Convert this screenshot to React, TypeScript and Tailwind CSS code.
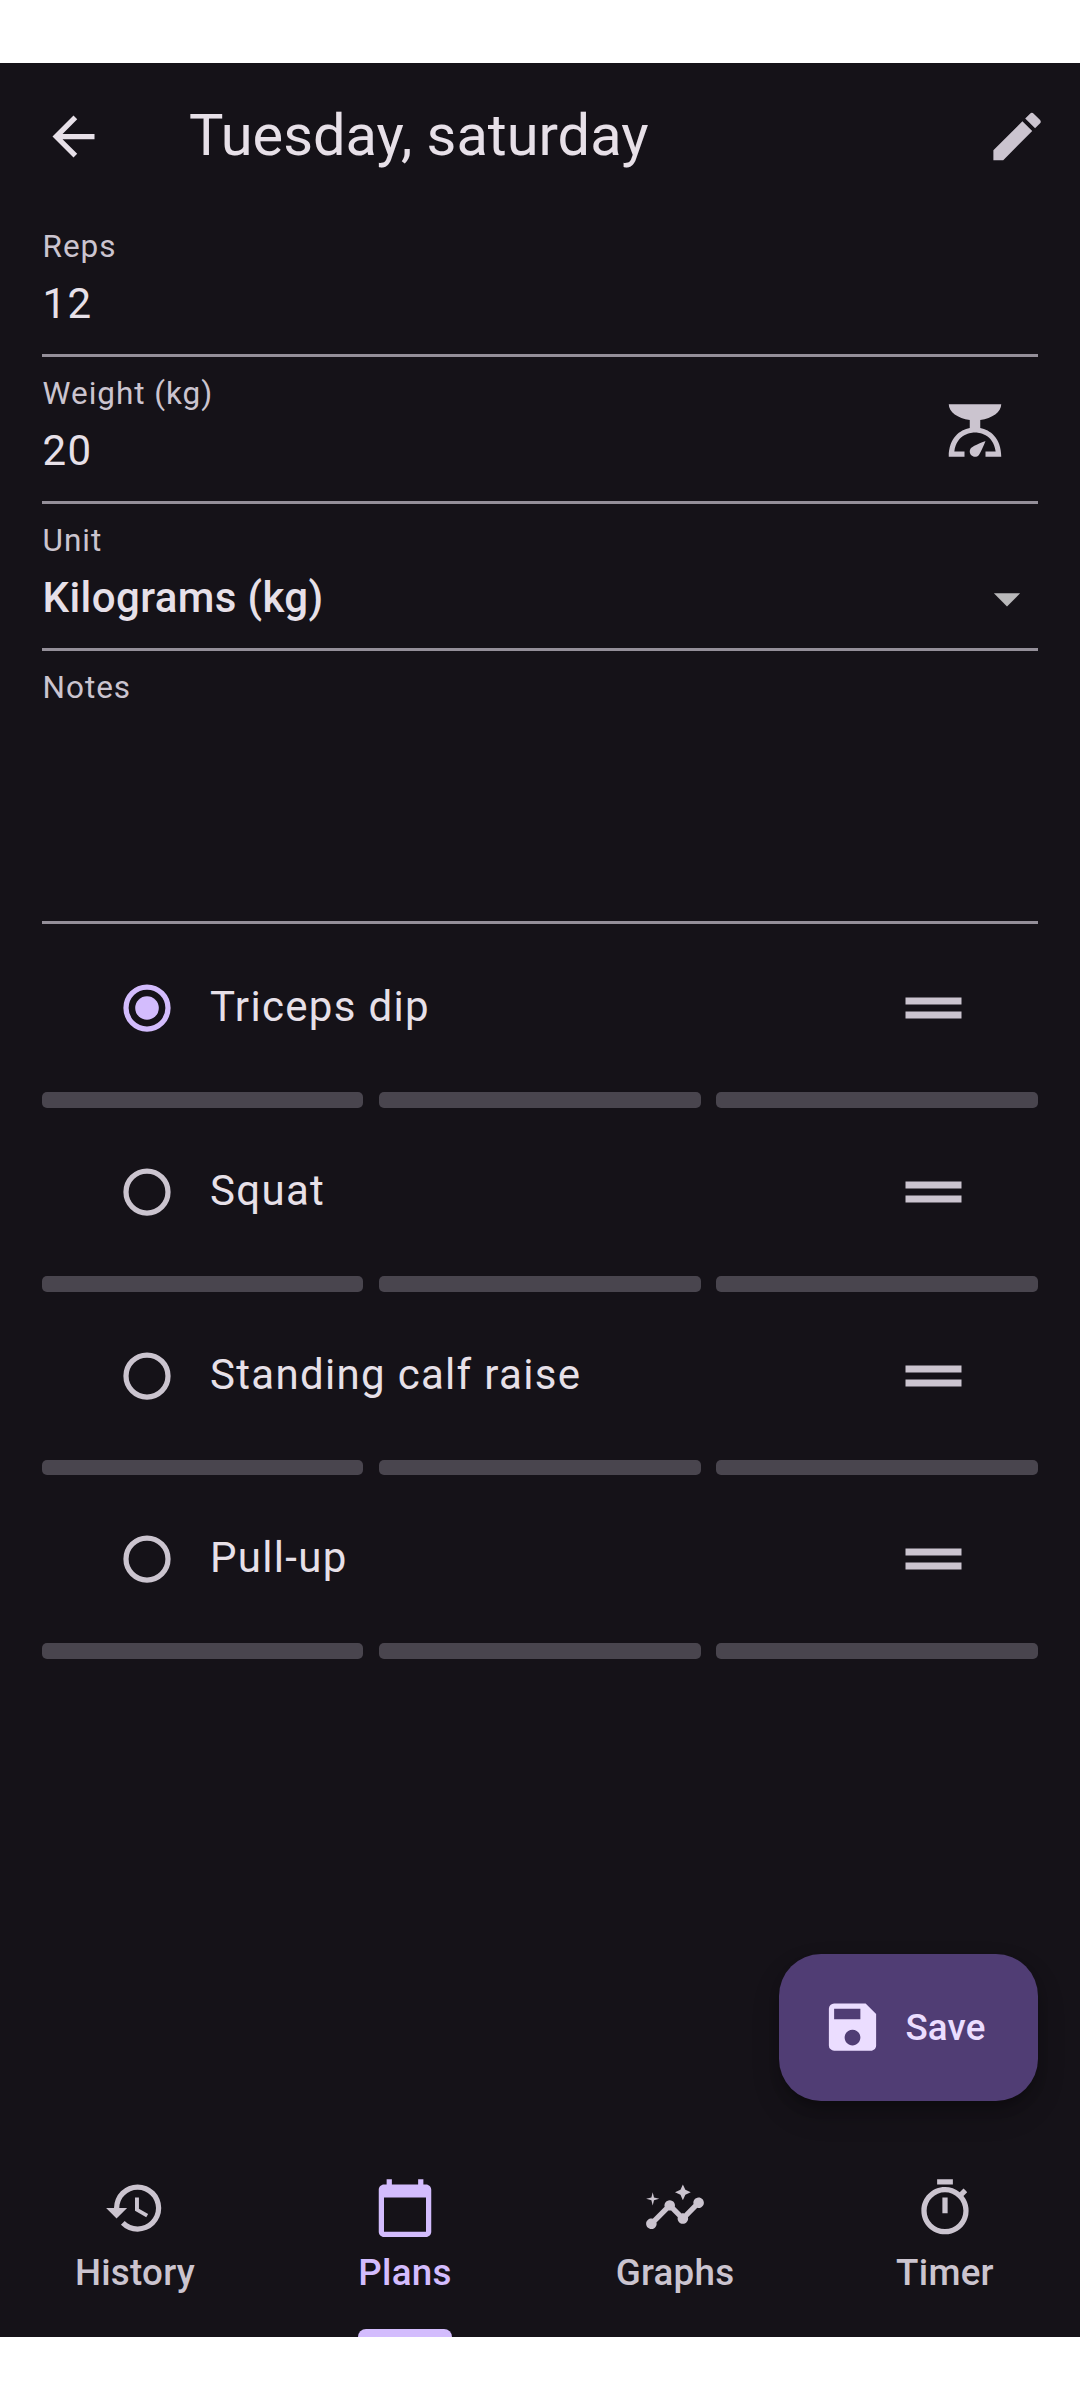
import type { ReactNode } from "react";
import {
  MdArrowBack,
  MdArrowDropDown,
  MdCalendarToday,
  MdEdit,
  MdHistory,
  MdInsights,
  MdOutlineTimer,
  MdSave,
  MdScale,
} from "react-icons/md";

type FieldProps = {
  label: string;
  value?: string;
  strong?: boolean;
  tall?: boolean;
  trailing?: ReactNode;
};

function Field({ label, value, strong, tall, trailing }: FieldProps) {
  return (
    <div
      className={`flex items-start justify-between border-b-[3px] border-[#948f99] pt-[18px] ${
        tall ? "h-[273px]" : "h-[147px]"
      }`}
    >
      <div className="flex flex-col gap-[14px] pl-[0.6px] whitespace-nowrap">
        <span className="text-[31.5px] leading-[37px] tracking-[0.95px] text-[#cbc4cf]">{label}</span>
        {value && (
          <span
            className={
              strong
                ? "text-[42px] leading-[49px] font-medium tracking-[0.394px]"
                : "text-[42px] leading-[49px] tracking-[1.3125px]"
            }
          >
            {value}
          </span>
        )}
      </div>
      {trailing}
    </div>
  );
}

function Radio({ selected }: { selected: boolean }) {
  return (
    <svg viewBox="0 0 48 48" className={`size-12 ${selected ? "text-[#d3bcfd]" : "text-[#cbc4cf]"}`}>
      <circle cx="24" cy="24" r="21" fill="none" stroke="currentColor" strokeWidth="5.25" />
      {selected && <circle cx="24" cy="24" r="11.8" fill="currentColor" />}
    </svg>
  );
}

function DragHandle() {
  return (
    <svg viewBox="0 0 84 84" className="size-[84px] text-[#cbc4cf]">
      <path d="M14.5 31.5h56v7h-56zM14.5 45.5h56v7h-56z" fill="currentColor" />
    </svg>
  );
}

function Exercise({ name, selected }: { name: string; selected: boolean }) {
  return (
    <li>
      <div className="flex h-[168px] items-center pr-[63px] pl-[81px]">
        <Radio selected={selected} />
        <span className="ml-[39px] grow pb-[3px] text-[42px] leading-[49px] tracking-[1.3125px]">{name}</span>
        <DragHandle />
      </div>
      <div className="grid h-[15.75px] grid-cols-[320.9px_321.9px_1fr] gap-[15.75px]">
        <div className="rounded-[5px] bg-[#49454e]" />
        <div className="rounded-[5px] bg-[#49454e]" />
        <div className="rounded-[5px] bg-[#49454e]" />
      </div>
    </li>
  );
}

const exercises = ["Triceps dip", "Squat", "Standing calf raise", "Pull-up"];

const tabs = [
  { label: "History", Icon: MdHistory },
  { label: "Plans", Icon: MdCalendarToday },
  { label: "Graphs", Icon: MdInsights },
  { label: "Timer", Icon: MdOutlineTimer },
];

export default function App() {
  return (
    <div className="h-[2400px] w-[1080px] bg-white pt-[63px] font-['Roboto',sans-serif]">
      <div className="flex h-[2274px] flex-col bg-[#151218] text-[#e7e0e8]">
        <header className="flex h-[147px] items-center pr-8 pl-[42px]">
          <MdArrowBack className="size-[63px]" />
          <h1 className="ml-[84px] grow pb-[3px] text-[57.75px] leading-[68px] whitespace-nowrap">
            Tuesday, saturday
          </h1>
          <MdEdit className="size-[63px] translate-x-[0.5px] text-[#cbc4cf]" />
        </header>

        <main className="flex grow flex-col px-[42px]">
          <Field label="Reps" value="12" />
          <Field
            label="Weight (kg)"
            value="20"
            trailing={<MdScale className="mt-6 mr-8 size-[63px] translate-x-[0.5px] text-[#cbc4cf]" />}
          />
          <Field
            label="Unit"
            value="Kilograms (kg)"
            strong
            trailing={<MdArrowDropDown className="mt-[45px] size-[63px] translate-x-[0.5px] text-[#b9b8ba]" />}
          />
          <Field label="Notes" tall />
          <ul>
            {exercises.map((name, i) => (
              <Exercise key={name} name={name} selected={i === 0} />
            ))}
          </ul>
          <button className="mt-auto mb-[47px] flex h-[147px] w-[259px] items-center gap-[21.4px] self-end rounded-[42px] bg-[#503d74] pl-[42px] text-[#ebddff] shadow-[0_8px_14px_-4px_rgba(0,0,0,0.3),0_14px_28px_rgba(0,0,0,0.18)]">
            <MdSave className="size-[63px] -translate-y-[0.5px]" />
            <span className="text-[36.75px] leading-[43px] font-medium tracking-[0.2px]">Save</span>
          </button>
        </main>

        <nav className="grid h-[189px] grid-cols-4">
          {tabs.map(({ label, Icon }) => {
            const active = label === "Plans";
            return (
              <div
                key={label}
                className={`flex flex-col items-center pt-7 ${active ? "text-[#d3bcfd]" : "text-[#cbc4cf]"}`}
              >
                <Icon className="mr-px size-[63px] shrink-0 translate-x-[0.5px] translate-y-[0.5px]" />
                <div className="mt-3 flex grow flex-col justify-between">
                  <span className="text-[36.75px] leading-[43px] font-medium tracking-[0.2625px]">{label}</span>
                  {active && <div className="h-2 rounded-t-[8px] bg-[#d3bcfd]" />}
                </div>
              </div>
            );
          })}
        </nav>
      </div>
    </div>
  );
}
